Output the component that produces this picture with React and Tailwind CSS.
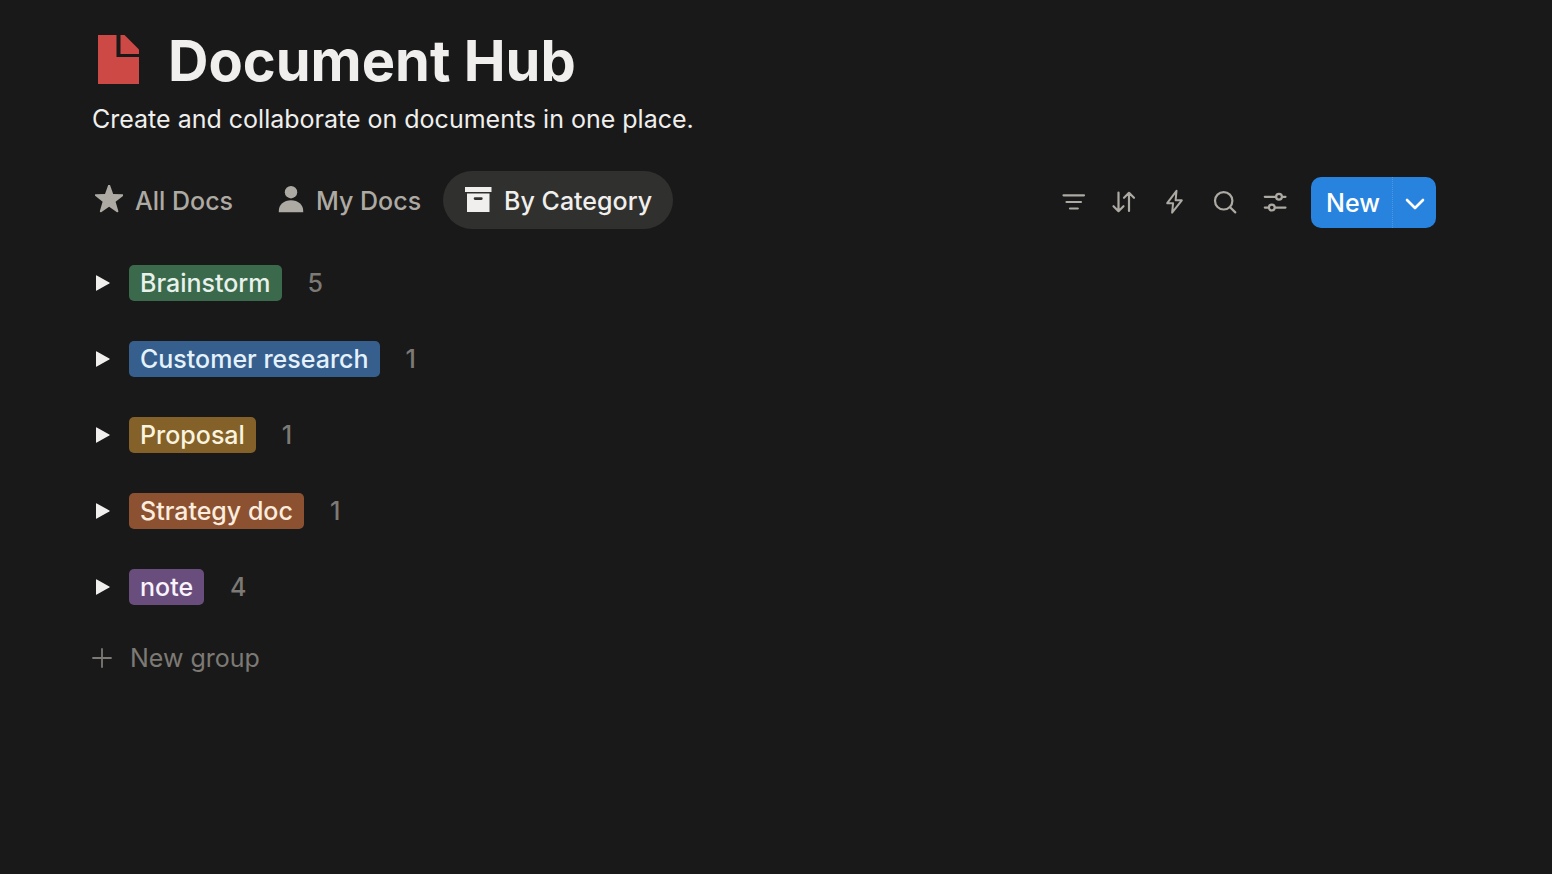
const TABS = [
  { id: 'all', label: 'All Docs', Icon: StarIcon },
  { id: 'mine', label: 'My Docs', Icon: PersonIcon },
  { id: 'category', label: 'By Category', Icon: ArchiveIcon },
]

const TOOLS = [
  { label: 'Filter', Icon: FilterIcon },
  { label: 'Sort', Icon: SortIcon },
  { label: 'Automations', Icon: BoltIcon },
  { label: 'Search', Icon: SearchIcon },
  { label: 'View settings', Icon: SlidersIcon },
]

const GROUPS = [
  { name: 'Brainstorm', count: 5, color: 'bg-[#3a694b] text-[#e8f1ec]' },
  { name: 'Customer research', count: 1, color: 'bg-[#365f8d] text-[#e5f2fc]' },
  { name: 'Proposal', count: 1, color: 'bg-[#836129] text-[#faf3dd]' },
  { name: 'Strategy doc', count: 1, color: 'bg-[#8b5131] text-[#fbecdd]' },
  { name: 'note', count: 4, color: 'bg-[#694e7d] text-[#f8f3fc]' },
]

function DocIcon() {
  return (
    <svg width="42" height="49" viewBox="0 0 42 49" fill="#cd4945" aria-hidden="true">
      <path d="M0 0h18.500v22H41v27H0z" />
      <path d="M22.500 0h4L41 14.500V19H22.500z" />
    </svg>
  )
}

function StarIcon() {
  return (
    <svg width="28" height="28" viewBox="0 0 28 28" fill="currentColor" aria-hidden="true">
      <path d="M13.200 0q.9-1.200 1.800 0l3.200 9 9.600.3q1.200.5.3 1.500l-7.500 5.900 2.800 9.600q-.2 1.300-1.400.9L14.100 21.700 6.200 27.200q-1.200.4-1.400-.9l2.800-9.600L.1 10.800q-.9-1 .3-1.500L10 9z" />
    </svg>
  )
}

function PersonIcon() {
  return (
    <svg width="28" height="28" viewBox="0 0 28 28" fill="currentColor" aria-hidden="true">
      <circle cx="15" cy="7.200" r="6.200" />
      <path d="M2.800 27.200v-1.300C2.800 19.700 8 15.300 15 15.300s12.200 4.400 12.200 10.600v1.300z" />
    </svg>
  )
}

function ArchiveIcon() {
  return (
    <svg width="28" height="28" viewBox="0 0 28 28" fill="currentColor" aria-hidden="true">
      <path d="M1 2h26.500v5H1z" />
      <path fillRule="evenodd" d="M3 8.500h22.500V27H3zM11 12.200q-1.300 0-1.300 1.400T11 15h6.400q1.300 0 1.300-1.400t-1.300-1.400z" />
    </svg>
  )
}

function LineIcon({ children, width = 2.2 }) {
  return (
    <svg
      width="28"
      height="28"
      viewBox="0 0 28 28"
      fill="none"
      stroke="currentColor"
      strokeWidth={width}
      strokeLinecap="round"
      strokeLinejoin="round"
      aria-hidden="true"
    >
      {children}
    </svg>
  )
}

function FilterIcon() {
  return (
    <LineIcon>
      <path d="M3.500 7.300h20.500M6.500 14h14.500M10 20.500h7.800" />
    </LineIcon>
  )
}

function SortIcon() {
  return (
    <LineIcon>
      <path d="M8.500 4.500v18.500M3.500 18.200l5 5 5-5M19 23V4.800M14 9.800l5-5 5 5" />
    </LineIcon>
  )
}

function BoltIcon() {
  return (
    <LineIcon width={2}>
      <path d="M16.500 2.800L7.200 15.200h5.900l-1 9.500L21.800 12.300h-6.200z" />
    </LineIcon>
  )
}

function SearchIcon() {
  return (
    <LineIcon>
      <circle cx="13.700" cy="12.800" r="8.700" />
      <path d="M20.100 19.200l5.200 5.200" />
    </LineIcon>
  )
}

function SlidersIcon() {
  return (
    <LineIcon>
      <path d="M4.800 8.800h11.300M22.200 8.800h3.300M4.800 19.600h4.100M15 19.600h10.500" />
      <circle cx="19" cy="8.800" r="2.900" />
      <circle cx="11.800" cy="19.600" r="2.900" />
    </LineIcon>
  )
}

function ViewTab({ label, Icon, selected }) {
  return (
    <button
      type="button"
      role="tab"
      aria-selected={selected}
      className={`flex h-[58px] items-center gap-3 rounded-full px-[21px] ${
        selected ? 'bg-[#30302e] text-[#f0efed]' : 'text-[#ada9a3]'
      }`}
    >
      <span className="pb-[2px]">
        <Icon />
      </span>
      <span className="pt-[2px]">{label}</span>
    </button>
  )
}

function GroupRow({ name, count, color }) {
  return (
    <li className="flex items-center">
      <button type="button" aria-label={`Expand ${name}`} className="flex h-9 w-[37px] items-center pl-1">
        <svg width="14" height="16" viewBox="0 0 14 16" fill="#f0efed" aria-hidden="true">
          <path d="M0 .8Q0 0 .8.4l12.500 7q.9.600 0 1.200l-12.500 7Q0 16 0 15.200z" />
        </svg>
      </button>
      <span className={`h-9 rounded-[5px] px-[11px] leading-9 ${color}`}>{name}</span>
      <span className="pl-[26px] text-[#7d7a75]">{count}</span>
    </li>
  )
}

export default function App() {
  return (
    <main className="min-h-screen bg-[#191919] pt-[35px] pr-[116px] pb-16 pl-[92px] font-['Inter',sans-serif] text-[25px] leading-9 font-medium text-[#f0efed]">
      <header>
        <div className="flex items-start gap-7 pl-[6px]">
          <DocIcon />
          <h1 className="text-[56px] leading-[52px] font-bold">Document Hub</h1>
        </div>
        <p className="pt-[14px] font-normal">Create and collaborate on documents in one place.</p>
      </header>

      <div className="mt-[34px] flex items-center justify-between">
        <div role="tablist" aria-label="Views" className="-ml-[18px] flex gap-px">
          {TABS.map((tab) => (
            <ViewTab key={tab.id} {...tab} selected={tab.id === 'category'} />
          ))}
        </div>
        <div className="flex items-center pt-1">
          <div className="mr-[23px] flex gap-[22px] text-[#ada9a3]">
            {TOOLS.map(({ label, Icon }) => (
              <button key={label} type="button" aria-label={label}>
                <Icon />
              </button>
            ))}
          </div>
          <div className="flex h-[51px] overflow-hidden rounded-[10px] bg-[#2783de] text-white">
            <button type="button" className="pt-[2px] pr-3 pl-[15px]">
              New
            </button>
            <button
              type="button"
              aria-label="More ways to create"
              className="flex w-11 items-center justify-center border-l border-dotted border-[#4a97e3] pt-[3px]"
            >
              <svg width="20" height="12" viewBox="0 0 20 12" fill="none" stroke="currentColor" strokeWidth="2.600" strokeLinecap="round" strokeLinejoin="round" aria-hidden="true">
                <path d="M2 2l8 8 8-8" />
              </svg>
            </button>
          </div>
        </div>
      </div>

      <ul className="mt-9 flex flex-col gap-10">
        {GROUPS.map((group) => (
          <GroupRow key={group.name} {...group} />
        ))}
      </ul>

      <button type="button" className="mt-[35px] flex items-center gap-[18px] font-normal text-[#7d7a75]">
        <svg width="20" height="20" viewBox="0 0 20 20" stroke="currentColor" strokeWidth="1.800" strokeLinecap="round" aria-hidden="true">
          <path d="M10 1v18M1 10h18" />
        </svg>
        New group
      </button>
    </main>
  )
}
